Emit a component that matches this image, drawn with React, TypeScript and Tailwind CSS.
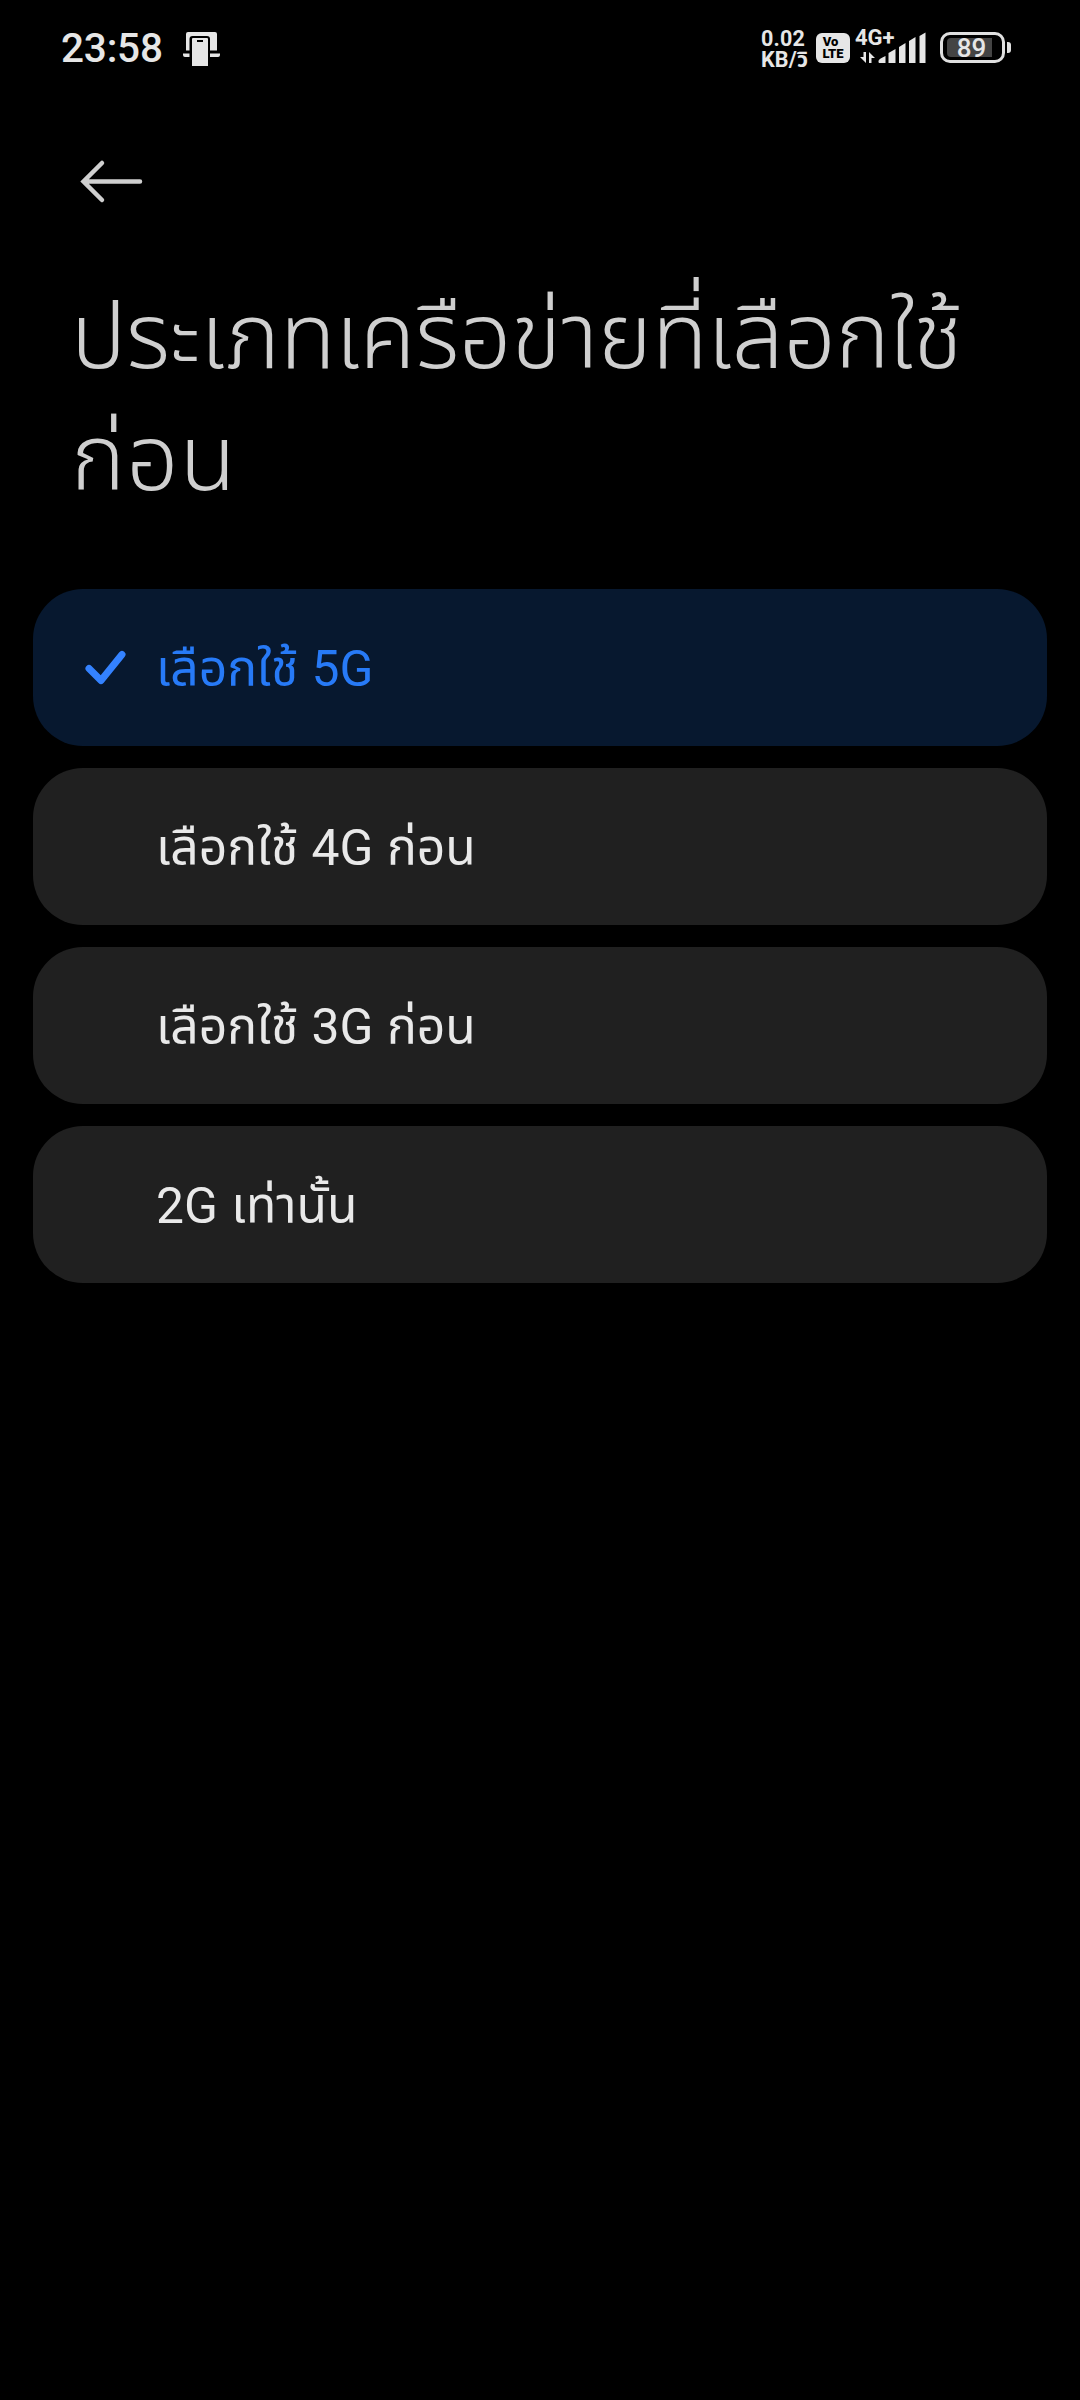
import clsx from "clsx";
import { useState } from "react";

const networkTypes = [
  { id: "5g", label: "เลือกใช้ 5G" },
  { id: "4g", label: "เลือกใช้ 4G ก่อน" },
  { id: "3g", label: "เลือกใช้ 3G ก่อน" },
  { id: "2g", label: "2G เท่านั้น" },
];

function StatusBar() {
  return (
    <div className="flex h-24 items-start justify-between pl-[61px] pr-[69px] pt-[29px] text-[#e6e6e6]">
      <div className="flex items-start">
        <span className="w-[122px] whitespace-nowrap text-[40.5px] font-medium leading-[38px] tracking-[-0.2px]">
          23:58
        </span>
        <svg width="38" height="36" viewBox="0 0 38 36" className="mt-[2px]" fill="#e6e6e6">
          <path d="M5 1h27q2 0 2 2v16.500h-7V8q0-3-3-3H9.500q-3 0-3 3v11.500H3V3q0-2 2-2z" />
          <path d="M0 22.500h6.500v3.500H2q-2 0-2-2zM27 22.500h10v1.500q0 2-2 2h-8z" />
          <path d="M9 8q0-1 1-1h14q1 0 1 1v27H9zM14 9v2h6V9z" fillRule="evenodd" />
        </svg>
      </div>

      <div className="flex items-start">
        <div className="-mt-px w-[55px] whitespace-nowrap text-[21.500px] font-bold leading-[21px] tracking-[0.2px]">
          <div>0.02</div>
          <div>KB/วิ</div>
        </div>
        <div className="mt-1 flex h-[30px] w-[34px] flex-col items-center justify-center rounded-[6px] bg-[#e6e6e6] text-[13px] font-black leading-[12px] text-black">
          <span className="-ml-[5px]">Vo</span>
          <span>LTE</span>
        </div>
        <div className="relative ml-[5px] h-9 w-[72px]">
          <span className="absolute -top-px left-0 text-[22px] font-bold leading-[20px]">4G+</span>
          <svg width="72" height="36" viewBox="0 0 72 36" fill="#e6e6e6">
            <path d="M8.500 23H11v11L5 28h3.500zM14 34h2.500v-5H20l-6-6z" />
            <path d="M23.500 32q0-2 7-5v7h-6q-1 0-1-1zM33.500 24l7-4v14h-7zM44 18l6.500-4v20H44zM54 12l6.500-4v26H54zM64.500 7l6-3.500V34h-6z" />
          </svg>
        </div>
        <div className="ml-[13px] mt-[3px] flex items-center">
          <div className="relative flex h-[31px] w-[65px] items-center justify-center rounded-[10px] border-[3px] border-[#e0e0e0] text-[26px]">
            <div className="absolute left-1 top-[3px] h-[19px] w-[45px] rounded-l-[4px] bg-[#444]" />
            <span className="relative -left-px font-medium leading-none">89</span>
          </div>
          <div className="ml-[2px] h-[11px] w-[4px] rounded-r-[3px] bg-[#e0e0e0]" />
        </div>
      </div>
    </div>
  );
}

export default function App() {
  const [selected, setSelected] = useState("5g");

  return (
    <div className="h-[2400px] w-[1080px] overflow-hidden bg-black font-['Roboto','Noto_Sans_Thai','Noto_Sans',sans-serif]">
      <StatusBar />

      <button aria-label="Back" className="ml-[80px] mt-[63px] block">
        <svg width="64" height="46" viewBox="0 0 64 46" fill="none" stroke="#cfcfcf" strokeWidth="4.5" strokeLinecap="round">
          <path d="M22 4 3.500 22.500 22 41M4 22.500h56" />
        </svg>
      </button>

      <h1 className="mt-[71px] pl-[71px] text-[92px] font-light leading-[122px] text-[#cfcfcf]">
        <span className="block whitespace-nowrap tracking-[-0.3px]">ประเภทเครือข่ายที่เลือกใช้</span>
        <span className="block whitespace-nowrap tracking-[1px]">ก่อน</span>
      </h1>

      <ul className="mt-[69px] flex flex-col gap-[22px] px-[33px]">
        {networkTypes.map((type) => (
          <li key={type.id}>
            <button
              onClick={() => setSelected(type.id)}
              className={clsx(
                "flex h-[157px] w-full items-center rounded-[50px] pl-[50px] text-[49.800px]",
                selected === type.id ? "bg-[#07182f] text-[#277af7]" : "bg-[#202020] text-[#e9e9e9]"
              )}
            >
              <span className="w-[73px]">
                {selected === type.id && (
                  <svg width="44" height="38" viewBox="0 0 44 38" fill="none" stroke="#3482ff" strokeWidth="7" strokeLinecap="round" strokeLinejoin="round">
                    <path d="M6 19.500 18 31.500 39 5.500" />
                  </svg>
                )}
              </span>
              <span className="whitespace-nowrap pt-[3px] [word-spacing:1px]">{type.label}</span>
            </button>
          </li>
        ))}
      </ul>
    </div>
  );
}
